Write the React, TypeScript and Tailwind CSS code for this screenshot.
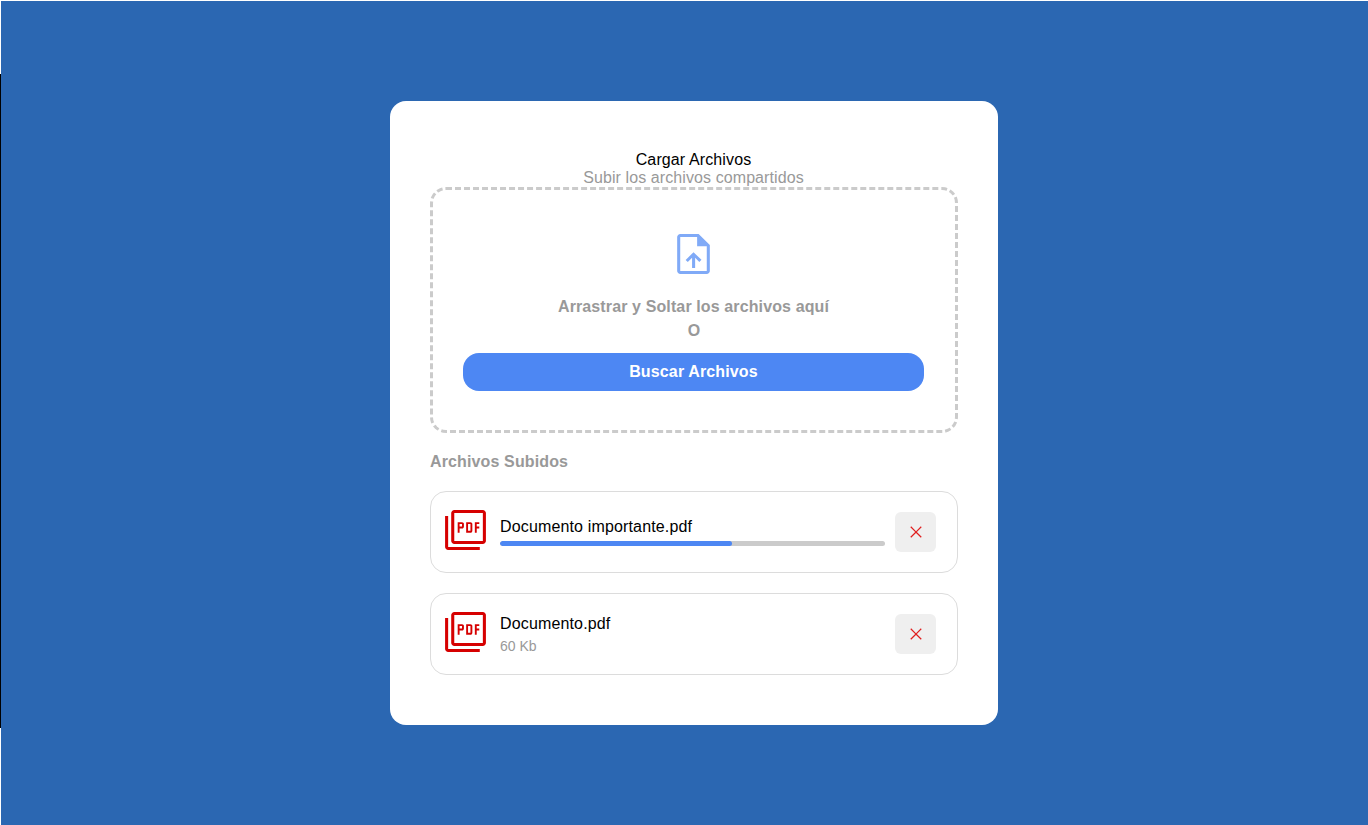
const PDF_LETTERS =
  "M331-431h37v-83h48q15.725 0 26.362-10.638Q453-535.275 453-551v-48q0-15.725-10.638-26.362Q431.725-636 416-636h-85v205Zm37-120v-48h48v48h-48Zm129 120h84q15 0 26-10.638T618-468v-131q0-15.725-11-26.362Q596-636 581-636h-84v205Zm37-37v-131h47v131h-47Zm133 37h37v-83h50v-37h-50v-48h50v-37h-87v205Z";
const PDF_FRAME =
  "M260-200q-24 0-42-18t-18-42v-560q0-24 18-42t42-18h560q24 0 42 18t18 42v560q0 24-18 42t-42 18H260Zm0-60h560v-560H260v560ZM140-80q-24 0-42-18t-18-42v-620h60v620h620v60H140Z";
const UPLOAD_PATH =
  "M452-202h60v-201l82 82 42-42-156-152-154 154 42 42 84-84v201ZM220-80q-24 0-42-18t-18-42v-680q0-24 18-42t42-18h361l219 219v521q0 24-18 42t-42 18H220Zm331-554v-186H220v680h520v-494H551Z";
const CLOSE_PATH =
  "m249-207-42-42 231-231-231-231 42-42 231 231 231-231 42 42-231 231 231 231-42 42-231-231-231 231Z";

function Icon({ d, detail, className }: { d: string; detail?: string; className: string }) {
  return (
    <svg
      viewBox="0 -960 960 960"
      preserveAspectRatio="none"
      fill="currentColor"
      aria-hidden="true"
      className={className}
    >
      <path d={d} />
      {detail && <path d={detail} transform="translate(-4 24) scale(1 1.04)" />}
    </svg>
  );
}

type FileItem = { name: string; progress?: number; size?: string };

const files: FileItem[] = [
  { name: "Documento importante.pdf", progress: 60.3 },
  { name: "Documento.pdf", size: "60 Kb" },
];

function FileRow({ file }: { file: FileItem }) {
  return (
    <li className="flex h-[82px] items-center rounded-[16px] border border-[#dcdcdc] pl-[10px] pr-[21px]">
      <Icon d={PDF_FRAME} detail={PDF_LETTERS} className="-mt-[4px] h-[48px] w-[49px] shrink-0 text-[#d60000]" />
      <div className={file.size ? "ml-[10px] flex w-[385px] flex-col pt-px" : "ml-[10px] flex w-[385px] flex-col"}>
        <span className="text-[16px] leading-[18px] tracking-[0.15px] text-black">{file.name}</span>
        {file.progress !== undefined && (
          <div className="mt-[5px] h-[5px] overflow-hidden rounded-full bg-[#cbcbcb]">
            <div className="h-full rounded-full bg-[#4d87f3]" style={{ width: `${file.progress}%` }} />
          </div>
        )}
        {file.size && (
          <span className="mt-[5px] text-[14px] leading-[16px] text-[#999999]">{file.size}</span>
        )}
      </div>
      <button
        aria-label="Eliminar"
        className="ml-auto flex h-[40px] w-[41px] items-center justify-center rounded-[6px] bg-[#efefef] text-[#e01f1f]"
      >
        <Icon d={CLOSE_PATH} className="size-[20px]" />
      </button>
    </li>
  );
}

export default function App() {
  return (
    <div className="flex h-[825px] w-[1368px] overflow-hidden bg-white pt-px font-['Liberation_Sans',Arial,sans-serif]">
      <div className="mt-[73px] h-[654px] w-px shrink-0 bg-black" />
      <main className="flex flex-1 items-start bg-[#2b67b2] pl-[389px] pt-[100px]">
        <section className="flex h-[624px] w-[608px] flex-col rounded-[16px] bg-white px-[40px] pt-[50px]">
          <h1 className="pr-px text-center text-[16px] leading-[18px] tracking-[0.12px] text-black">Cargar Archivos</h1>
          <p className="pr-px text-center text-[16px] leading-[18px] tracking-[0.09px] text-[#999999]">
            Subir los archivos compartidos
          </p>
          <div className="flex h-[246px] shrink-0 flex-col items-center rounded-[16px] border-[3px] border-dashed border-[#cbcbcb] pl-[30px] pr-[31px] pt-[40px] text-[16px] font-bold text-[#999999]">
            <Icon d={UPLOAD_PATH} className="h-[48px] w-[49px] shrink-0 text-[#80aaf7]" />
            <p className="mt-[20px] leading-[18px] tracking-[0.12px]">Arrastrar y Soltar los archivos aquí</p>
            <p className="mt-[6px] pl-px leading-[18px]">O</p>
            <button className="mt-[13px] h-[38px] w-[461px] rounded-[16px] bg-[#4d87f3] leading-[18px] tracking-[0.14px] text-white">
              Buscar Archivos
            </button>
          </div>
          <h2 className="mt-[20px] text-[16px] font-bold leading-[18px] tracking-[0.13px] text-[#999999]">
            Archivos Subidos
          </h2>
          <ul className="mt-[20px] flex flex-col gap-[20px]">
            {files.map((file) => (
              <FileRow key={file.name} file={file} />
            ))}
          </ul>
        </section>
      </main>
    </div>
  );
}
